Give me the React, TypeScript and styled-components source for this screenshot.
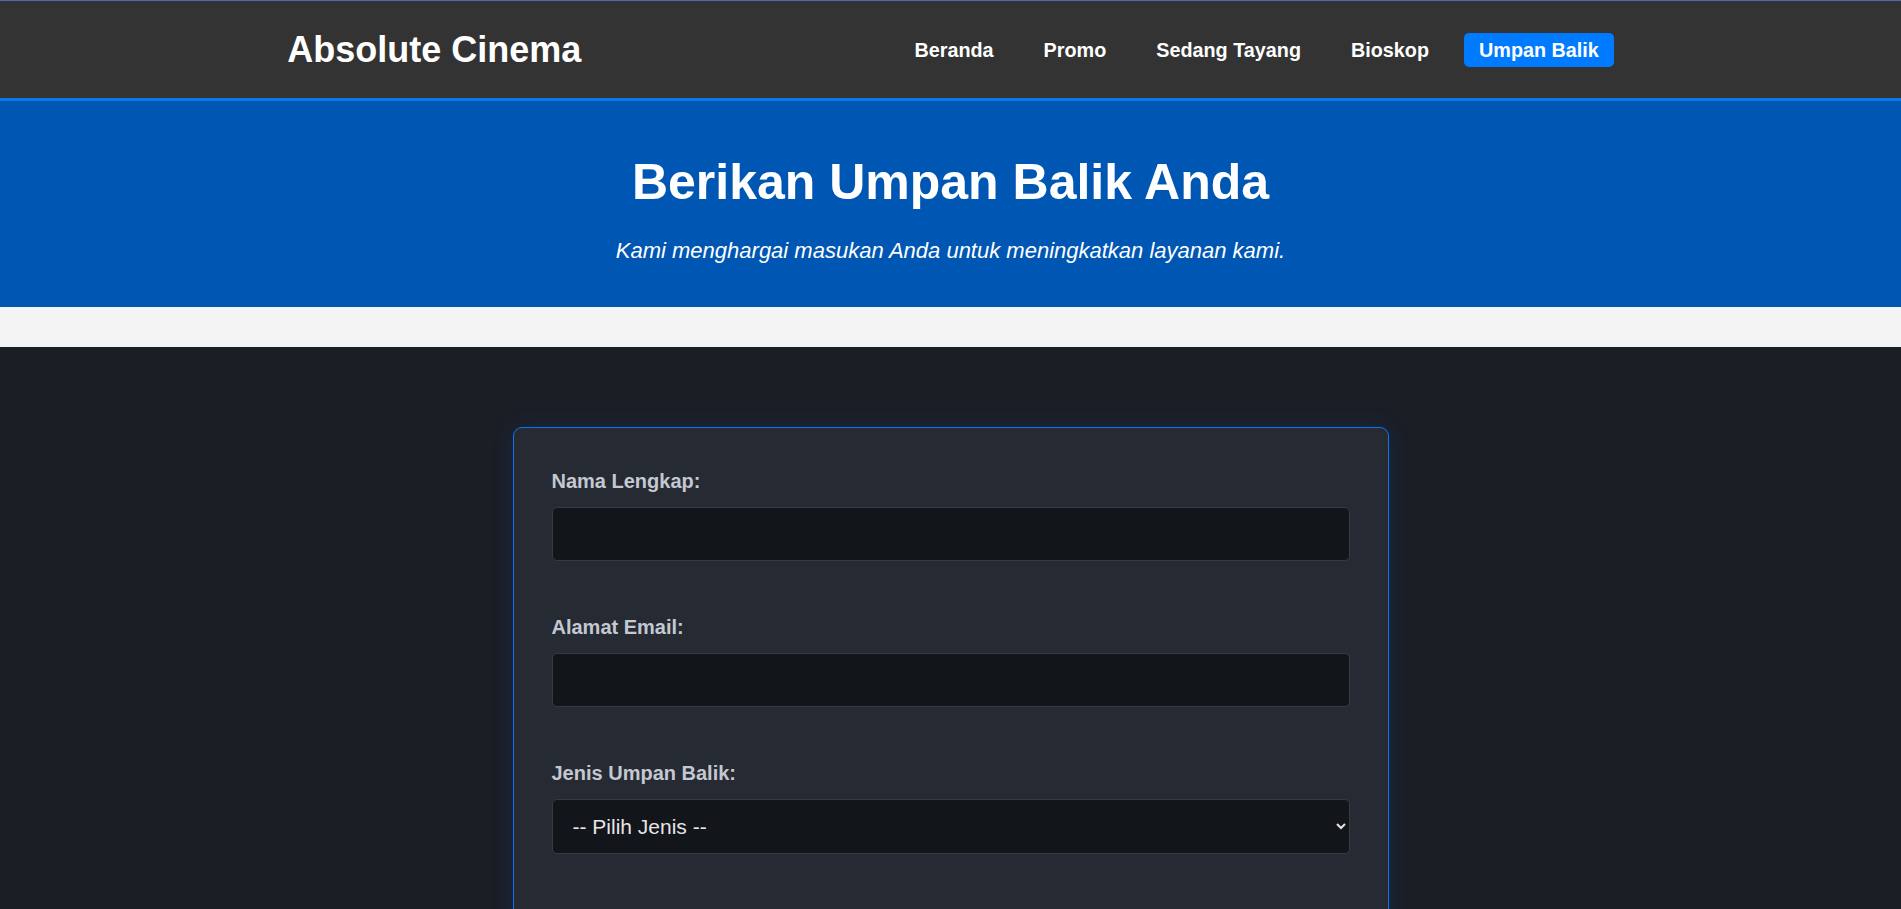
import React from "react";
import styled, { createGlobalStyle } from "styled-components";

const GlobalStyle = createGlobalStyle`
  html, body {
    margin: 0;
    padding: 0;
    background: #1b1e25;
    font-family: "Liberation Sans", Arial, sans-serif;
  }
  * { box-sizing: border-box; }
`;

const Header = styled.header`
  background: #333333;
  border-top: 1px solid #5a5fb8;
  border-bottom: 3px solid #0a78f0;
  height: 101px;
`;

const HeaderInner = styled.div`
  width: 70%;
  margin: 0 auto;
  height: 100%;
  display: flex;
  align-items: center;
  justify-content: space-between;
  padding: 0 2px 0 2px;
`;

const Logo = styled.div`
  color: #ffffff;
  font-size: 36px;
  font-weight: 700;
  margin-top: 1px;
`;

const Nav = styled.nav`
  display: flex;
  align-items: center;
  gap: 20px;
  margin-top: 1px;
`;

const NavLink = styled.a<{ $active?: boolean }>`
  color: #ffffff;
  text-decoration: none;
  font-weight: 700;
  font-size: 19.8px;
  padding: 5.5px 15px;
  border-radius: 5px;
  background: ${(p) => (p.$active ? "#007bff" : "transparent")};
`;

const Hero = styled.section`
  background: #0056b3;
  color: #ffffff;
  text-align: center;
  padding: 52px 20px 43px;
`;

const HeroTitle = styled.h1`
  margin: 0 0 27px;
  font-size: 50px;
  font-weight: 700;
`;

const HeroSub = styled.p`
  margin: 0;
  font-size: 22px;
  font-style: italic;
`;

const Band = styled.div`
  height: 40px;
  background: #f4f4f4;
`;

const Main = styled.main`
  background: #1b1e25;
  padding: 80px 20px 80px;
  display: flex;
  justify-content: center;
`;

const Card = styled.form`
  width: 876px;
  background: #262a33;
  border: 1px solid #1172f0;
  border-radius: 9px;
  padding: 42px 38px 40px;
  box-shadow: 0 0 22px rgba(0, 110, 255, 0.15);
`;

const Field = styled.div`
  display: flex;
  flex-direction: column;
  gap: 14px;
  margin-bottom: 55px;
`;

const Label = styled.label`
  color: #c3c8d1;
  font-size: 20px;
  font-weight: 700;
`;

const Input = styled.input`
  height: 54px;
  width: 100%;
  background: #12151a;
  border: 1px solid #353a44;
  border-radius: 5px;
  color: #e6e6e6;
  font-family: "Liberation Sans", Arial, sans-serif;
  font-size: 21px;
  padding: 0 20px;
  outline: none;
`;

const Select = styled.select`
  height: 55px;
  width: 100%;
  background: #12151a;
  border: 1px solid #353a44;
  border-radius: 5px;
  color: #e6e6e6;
  font-family: "Liberation Sans", Arial, sans-serif;
  font-size: 21px;
  padding: 0 14px 0 16px;
  outline: none;
  color-scheme: dark;
`;

export default function App() {
  return (
    <>
      <GlobalStyle />
      <Header>
        <HeaderInner>
          <Logo>Absolute Cinema</Logo>
          <Nav>
            <NavLink href="#">Beranda</NavLink>
            <NavLink href="#">Promo</NavLink>
            <NavLink href="#">Sedang Tayang</NavLink>
            <NavLink href="#">Bioskop</NavLink>
            <NavLink href="#" $active>
              Umpan Balik
            </NavLink>
          </Nav>
        </HeaderInner>
      </Header>
      <Hero>
        <HeroTitle>Berikan Umpan Balik Anda</HeroTitle>
        <HeroSub>Kami menghargai masukan Anda untuk meningkatkan layanan kami.</HeroSub>
      </Hero>
      <Band />
      <Main>
        <Card onSubmit={(e) => e.preventDefault()}>
          <Field>
            <Label htmlFor="nama">Nama Lengkap:</Label>
            <Input id="nama" type="text" />
          </Field>
          <Field>
            <Label htmlFor="email">Alamat Email:</Label>
            <Input id="email" type="email" />
          </Field>
          <Field>
            <Label htmlFor="jenis">Jenis Umpan Balik:</Label>
            <Select id="jenis" defaultValue="">
              <option value="">-- Pilih Jenis --</option>
              <option value="saran">Saran</option>
              <option value="keluhan">Keluhan</option>
              <option value="pujian">Pujian</option>
            </Select>
          </Field>
          <Field>
            <Label htmlFor="pesan">Pesan:</Label>
            <Input id="pesan" type="text" />
          </Field>
        </Card>
      </Main>
    </>
  );
}
